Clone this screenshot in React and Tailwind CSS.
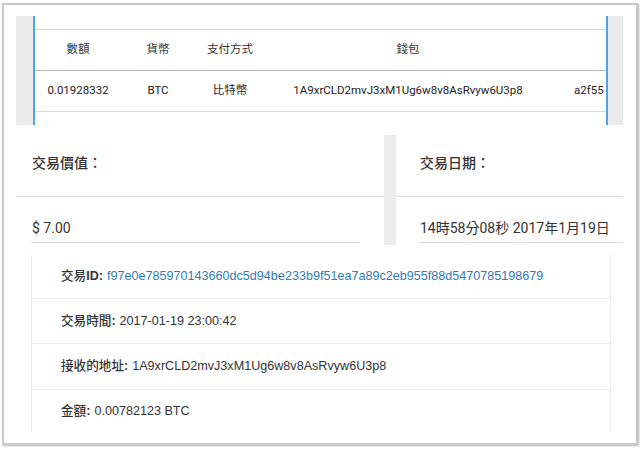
const cjk = "font-['Roboto','Noto_Sans_CJK_TC',sans-serif]";
const helv = "font-['Liberation_Sans','Noto_Sans_CJK_TC',sans-serif]";

const cols = [
  { w: 'w-[86px] justify-center', head: '數額', val: '0.01928332' },
  { w: 'w-[74px] justify-center', head: '貨幣', val: 'BTC' },
  { w: 'w-[70px] justify-center', head: '支付方式', val: '比特幣' },
  { w: 'w-[286px] justify-center', head: '錢包', val: '1A9xrCLD2mvJ3xM1Ug6w8v8AsRvyw6U3p8' },
  { w: 'w-[55px] justify-start pl-[23px]', head: '', val: 'a2f55' },
];

function TxTable() {
  return (
    <div className={`flex h-[109px] w-[607px] ${cjk}`}>
      <div className="w-[19px] shrink-0 bg-[#ebeaea] border-r-2 border-[#4ea3ec]" />
      <div className="flex-1 flex flex-col overflow-hidden">
        <div className="h-[14px] border-b border-[#d9d9d9] shrink-0" />
        <div className="h-[41px] shrink-0 flex items-center border-b border-[#b9b9b9] text-[11.5px] text-[#333] whitespace-nowrap">
          {cols.map((c, i) => (
            <div key={i} className={`flex shrink-0 ${c.w}`}>{c.head}</div>
          ))}
        </div>
        <div className="h-[41px] shrink-0 flex items-center border-b border-[#d9d9d9] text-[11.5px] text-[#222] whitespace-nowrap">
          {cols.map((c, i) => (
            <div key={i} className={`flex shrink-0 ${c.w}`}>{c.val}</div>
          ))}
        </div>
      </div>
      <div className="w-[17px] shrink-0 bg-[#ebeaea] border-l-2 border-[#4ea3ec]" />
    </div>
  );
}

function Summary() {
  return (
    <div className={`flex h-[120px] w-[607px] text-[14px] text-[#333] ${cjk}`}>
      <div className="w-[368px] flex flex-col">
        <div className="h-[72px] border-b border-[#dcdcdc] pl-[16px] pt-[29px] leading-[18px] font-medium">
          交易價值：
        </div>
        <div className="ml-[15px] w-[329px] border-b border-[#dcdcdc] pl-[1px] pt-[22px] pb-[5px] leading-[18px]">
          $ 7.00
        </div>
      </div>
      <div className="w-[12px] mt-[10px] bg-[#ececec]" />
      <div className="flex-1 flex flex-col">
        <div className="h-[72px] border-b border-[#dcdcdc] pl-[24px] pt-[29px] leading-[18px] font-medium">
          交易日期：
        </div>
        <div className="ml-[23px] border-b border-[#dcdcdc] pl-[1px] pt-[22px] pb-[5px] leading-[18px]">
          14時58分08秒 2017年1月19日
        </div>
      </div>
    </div>
  );
}

const rows = [
  { h: 'h-[44px] border-b', label: '交易', tail: 'ID:', value: 'f97e0e785970143660dc5d94be233b9f51ea7a89c2eb955f88d5470785198679', link: true },
  { h: 'h-[45px] border-b', label: '交易時間', tail: ':', value: '2017-01-19 23:00:42' },
  { h: 'h-[46px] border-b', label: '接收的地址', tail: ':', value: '1A9xrCLD2mvJ3xM1Ug6w8v8AsRvyw6U3p8' },
  { h: 'h-[42px]', label: '金額', tail: ':', value: '0.00782123 BTC' },
];

function Details() {
  return (
    <div className={`mt-[10px] ml-[15px] w-[580px] border-x border-[#ececec] text-[12.6px] text-[#333] ${helv}`}>
      {rows.map((r) => (
        <div key={r.label} className={`flex items-center pl-[29px] border-[#ececec] whitespace-nowrap ${r.h}`}>
          <span className="font-medium">{r.label}</span>
          <span className="font-bold">{r.tail}</span>
          <span className={`ml-[4px] ${r.link ? 'text-[#337ab7]' : ''}`}>{r.value}</span>
        </div>
      ))}
    </div>
  );
}

export default function App() {
  return (
    <div className="w-[640px] h-[449px] bg-white pt-[3px] pl-[2px]">
      <div className="w-[636px] h-[442px] border-2 border-[#c9c9c9] bg-white pl-[12px] pt-[11px] shadow-[1px_1px_2px_rgba(0,0,0,0.3)] overflow-hidden">
        <TxTable />
        <Summary />
        <Details />
      </div>
    </div>
  );
}
